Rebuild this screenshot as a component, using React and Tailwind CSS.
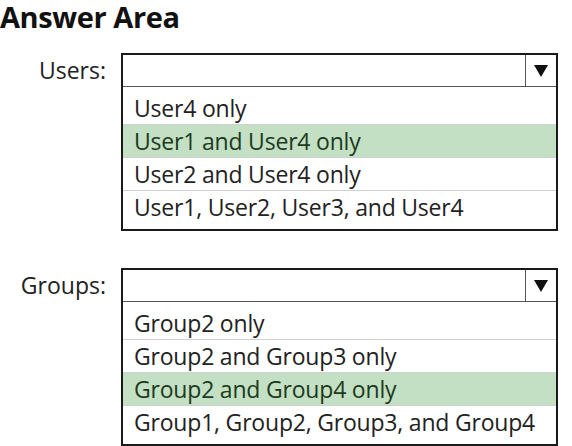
import React from "react";

const sections = [
    {
        label: "Users:",
        options: [
            "User4 only",
            "User1 and User4 only",
            "User2 and User4 only",
            "User1, User2, User3, and User4",
        ],
        selected: 1,
    },
    {
        label: "Groups:",
        options: [
            "Group2 only",
            "Group2 and Group3 only",
            "Group2 and Group4 only",
            "Group1, Group2, Group3, and Group4",
        ],
        selected: 2,
    },
];

function Dropdown({ label, options, selected }) {
    return (
        <div className="flex items-start">
            <div className="w-[106px] h-[34px] flex items-center justify-end text-[23px] text-[#222]">
                {label}
            </div>
            <div className="ml-[15px] w-[437px] border-2 border-[#1a1a1a]">
                {/* Header */}
                <div className="flex h-[32px] border-b border-[#555]">
                    <div className="flex-1" />
                    <div className="w-[31px] border-l border-[#555] flex items-center justify-center">
                        <svg width="14" height="12" viewBox="0 0 14 12">
                            <path d="M0 0 H14 L7 12 Z" fill="#111" />
                        </svg>
                    </div>
                </div>
                {/* Options */}
                <div className="pt-[5px] pb-[5px]">
                    {options.map((opt, i) => (
                        <div
                            key={opt}
                            className={`h-[33px] px-[11px] flex items-center text-[23px] leading-none tracking-[-0.2px] ${
                                i < options.length - 1 ? "border-b border-[#d0d0d0]" : ""
                            } ${
                                i === selected
                                    ? "bg-[#c4e0c4] text-[#1c3a1c]"
                                    : "text-[#222]"
                            }`}
                        >
                            {opt}
                        </div>
                    ))}
                </div>
            </div>
        </div>
    );
}

export default function App() {
    return (
        <div
            className="w-[572px] h-[446px] bg-white overflow-hidden"
            style={{ fontFamily: '"Open Sans", "Noto Sans", sans-serif' }}
        >
            <h1 className="pt-[1px] text-[29px] leading-[32px] font-bold text-[#111] -tracking-[0.4px]">
                Answer Area
            </h1>
            <div className="mt-[20px] flex flex-col gap-[37px]">
                {sections.map((s) => (
                    <Dropdown key={s.label} {...s} />
                ))}
            </div>
        </div>
    );
}
